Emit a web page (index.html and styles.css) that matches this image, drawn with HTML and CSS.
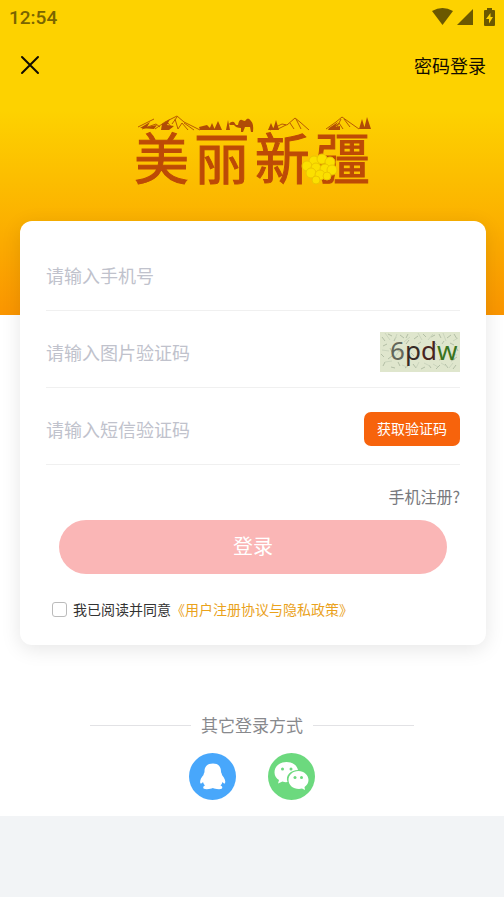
FILE: index.html
```html
<!DOCTYPE html>
<html lang="zh-CN">
<head>
  <meta charset="UTF-8">
  <meta name="viewport" content="width=device-width, initial-scale=1">
  <title>登录</title>
  <link rel="stylesheet" href="styles.css">
</head>
<body>
  <main class="page">
    <header class="hero">
      <div class="status">
        <span class="clock">12:54</span>
        <svg class="status-icons" width="64" height="20" viewBox="0 0 64 20" aria-hidden="true">
          <path d="M0 3Q10.500 -3 21 3L10.500 17Z"/>
          <path d="M25 17H41V1Z"/>
          <path fill-rule="evenodd" d="M55 0H60V2H62Q63 2 63 3V17Q63 18 62 18H53Q52 18 52 17V3Q52 2 53 2H55ZM58.500 5L54 11H57V15.500L61 9H58.500Z"/>
        </svg>
      </div>
      <nav class="nav">
        <button class="close" type="button" aria-label="关闭">
          <svg width="20" height="20" viewBox="0 0 20 20"><path d="M2 2L18 18M18 2L2 18"/></svg>
        </button>
        <a class="switch" href="#">密码登录</a>
      </nav>
      <div class="logo">
        <h1 class="logo-text"><span>美</span><span>丽</span><span>新</span><span>疆</span></h1>
        <svg class="logo-art" width="240" height="72" viewBox="0 0 240 72" aria-hidden="true">
          <!-- mountains -->
          <g class="ridge">
            <path d="M6 12L18 6L22 4M10 14L24 9L28 12M23 14L33 7L45 1L52 7L58 10L68 15M30 13L36 8L40 13M43 4L46 14L50 8L56 15M45 2L40 9M52 8L62 15"/>
            <path d="M138 15L150 9L155 10L163 3L168 7L177 15M146 14L154 10M158 8L162 14M164 4L169 14"/>
            <path d="M194 14L204 7L210 2L217 7L227 14M201 14L207 8L211 14M212 4L218 12M209 4L205 12"/>
          </g>
          <g class="shape">
            <path d="M8 13L18 7L15 12L25 10L22 14Z"/>
            <path d="M30 9L38 4L35 10L42 11L37 15H29Z"/>
            <path d="M67 12L75 10L80 15H68ZM77 15L80 8L83 15ZM82 15L86 6L90 15ZM94 15L96 5L98 15Z"/>
            <path d="M97 9Q99 6 102 7L104 10L106 10Q107 4 110 5Q112 6 113 6Q116 1 119 6Q122 9 121 17H119L118 12L113 12L111 17H109L109 13Q104 13 102 10L98 10Z"/>
            <path d="M136 15L139 8L142 15ZM141 15L144 5L147 15Z"/>
            <path d="M197 13L206 7L203 12L208 11V15H196ZM227 14L230 4L233 14ZM232 14L235 2L239 14Z"/>
          </g>
          <!-- grapes -->
          <g class="grapes">
            <circle cx="182" cy="46" r="5"/><circle cx="190" cy="44" r="5"/><circle cx="198" cy="47" r="5"/>
            <circle cx="175" cy="51" r="5"/><circle cx="184" cy="53" r="5"/><circle cx="193" cy="54" r="5"/><circle cx="200" cy="55" r="5"/>
            <circle cx="179" cy="58" r="5"/><circle cx="188" cy="60" r="5"/><circle cx="195" cy="61" r="4"/><circle cx="184" cy="65" r="4"/>
          </g>
        </svg>
      </div>
    </header>

    <form class="card">
      <div class="field">
        <input type="tel" placeholder="请输入手机号" aria-label="手机号">
      </div>
      <div class="field">
        <input type="text" placeholder="请输入图片验证码" aria-label="图片验证码">
        <button class="captcha" type="button">
          <svg width="80" height="40" viewBox="0 0 80 40">
            <rect width="80" height="40" fill="#dfe6cd"/>
            <g class="noise">
              <path d="M2 5l3 4M8 2l4 2M14 9l2-4M20 3l4 3M28 2l-2 4M34 7l4-3M43 2l3 3M51 5l4-2M59 2l2 4M67 6l4-3M74 2l3 5"/>
              <path d="M3 14l4-2M10 16l2 4M1 22l3 3M8 27l4-3M3 34l2-4M11 35l4 1M18 30l2 4M25 36l4-3M33 32l3 4M41 37l4-2M49 33l2 3M56 37l4-4M65 32l3 4M73 37l3-4"/>
              <path d="M70 11l4 2M76 15l2 4M71 29l4-2M62 12l2-3M54 10l3 3M41 10l-3 2M26 12l3-4M17 18l4 2M23 24l-4 3M31 21l3 3M46 26l4 2M59 28l4-2M77 25l-3 2"/>
            </g>
            <g class="noise light">
              <path d="M5 1l5 7M17 2l-2 5M24 10l6-5M38 1l4 7M48 8l5-6M63 1l3 8M73 9l5-3M2 18l7 1M5 30l7-1M15 25l4-6M22 33l5 2M36 36l3-6M44 31l6 3M53 32l5 3M61 31l7 4M70 22l7 1M69 36l4-5"/>
            </g>
            <text class="captcha-text" x="10" y="28"><tspan fill="#62675a">6</tspan><tspan fill="#352b26">p</tspan><tspan fill="#49251f">d</tspan><tspan fill="#397420">w</tspan></text>
          </svg>
        </button>
      </div>
      <div class="field">
        <input type="text" placeholder="请输入短信验证码" aria-label="短信验证码">
        <button class="get-code" type="button">获取验证码</button>
      </div>
      <a class="register" href="#">手机注册?</a>
      <button class="submit" type="submit">登录</button>
      <div class="agree">
        <input type="checkbox" id="agree">
        <label for="agree">我已阅读并同意</label><a href="#">《用户注册协议与隐私政策》</a>
      </div>
    </form>

    <section class="other">
      <h2 class="other-title">其它登录方式</h2>
      <div class="socials">
        <a href="#" aria-label="QQ">
          <svg width="47" height="47" viewBox="0 0 47 47">
            <circle cx="23.500" cy="23.500" r="23.500" fill="#48a7fb"/>
            <path fill="#fff" d="M24 10.500C18 10.500 15.500 14 15.500 18.500C15.500 20 14.500 20.500 14.500 22C11.500 25 10.500 29 11.500 30.500Q12.500 31 14 29Q14.500 31 16 32.500Q13.500 33.500 14.500 35.500Q17 37 22.500 35.500Q24 34.500 25 35.500Q31 37 33 35.500Q34 33.500 31.500 32.500Q33 31 33.500 29Q35 31 36 30.500C37 28 35.500 25 33 22C33 20.500 32 20 32 18.500C32 14 29.500 10.500 24 10.500Z"/>
          </svg>
        </a>
        <a href="#" aria-label="微信">
          <svg width="47" height="47" viewBox="0 0 47 47">
            <circle cx="23.500" cy="23.500" r="23.500" fill="#6cd97e"/>
            <path fill="#fff" d="M18.500 9C11.500 9 6.500 13.500 6.500 19.500C6.500 23 8.500 25.500 11 27L10 30.500L14.500 28.500Q17 29.500 19.500 29C17 22 23 17 30 17C29 12 24.500 9 18.500 9Z"/>
            <path fill="#fff" d="M30.500 18C24.500 18 20.500 22 20.500 27C20.500 32 25 36 31 36L34 35.500L37 37L36.500 34C39 32 40.500 30 40.500 27C40.500 22 36 18 30.500 18Z"/>
            <g fill="#6cd97e"><circle cx="14.500" cy="16" r="1.500"/><circle cx="23" cy="16" r="1.500"/><circle cx="27" cy="24.500" r="1.500"/><circle cx="33.500" cy="24.500" r="1.500"/></g>
          </svg>
        </a>
      </div>
    </section>
  </main>
</body>
</html>
```

FILE: styles.css
```css
* {
  box-sizing: border-box;
}
body {
  margin: 0;
  background: #f2f4f6;
  font-family: "Noto Sans CJK SC", sans-serif;
}
a {
  text-decoration: none;
}
button {
  border: none;
  padding: 0;
  background: none;
  font-family: inherit;
  cursor: pointer;
}
svg {
  display: block;
}
.page {
  background: #fff;
  padding-bottom: 16px;
}
.hero {
  padding-bottom: 124px;
  background: linear-gradient(#fdd200 35%, #fa9500);
}
.status {
  display: flex;
  justify-content: space-between;
  align-items: center;
  height: 35px;
  padding: 0 8px 0 9px;
}
.clock {
  font: 500 19px Roboto, sans-serif;
  color: #7a6500;
}
.status-icons {
  fill: #6b5800;
}
.nav {
  display: flex;
  justify-content: space-between;
  align-items: center;
  height: 60px;
  padding: 0 18px 0 20px;
}
.close svg {
  fill: none;
  stroke: #120c00;
  stroke-width: 2;
  stroke-linecap: round;
}
.switch {
  font-size: 18px;
  color: #120c00;
}
.logo {
  position: relative;
  width: 240px;
  margin: 20px auto 0;
  padding-top: 4px;
}
.logo-text {
  display: flex;
  justify-content: space-between;
  margin: 0;
  padding: 0 2px;
  font-size: 55px;
  line-height: 72px;
  font-weight: 400;
  color: #bd4a06;
  -webkit-text-stroke: 1px #bd4a06;
}
.logo-art {
  position: absolute;
  left: 0;
  top: 0;
}
.ridge {
  fill: none;
  stroke: #b85a04;
  stroke-width: 1;
}
.shape {
  fill: #b04c06;
}
.grapes {
  fill: #fbe000;
  stroke: #ecc500;
  stroke-width: 1;
}
.card {
  position: relative;
  margin: -94px 18px 0 20px;
  padding: 13px 26px 24px;
  border-radius: 12px;
  background: #fff;
  box-shadow: 0 4px 20px rgba(0, 0, 0, 0.1);
}
.field {
  display: flex;
  align-items: center;
  height: 77px;
  padding-top: 6px;
  border-bottom: 1px solid #f0f0f0;
}
.field input {
  flex: 1;
  min-width: 0;
  padding: 0;
  border: none;
  outline: none;
  background: none;
  font: 18px "Noto Sans CJK SC", sans-serif;
}
.field input::placeholder {
  color: #c0c2cc;
}
.noise {
  fill: none;
  stroke: #b3bfa6;
  stroke-width: 1;
}
.light {
  stroke: #cbd5bd;
}
.captcha-text {
  font: 26px "Noto Sans", sans-serif;
}
.get-code {
  width: 96px;
  height: 34px;
  padding-bottom: 2px;
  border-radius: 7px;
  background: #f7630c;
  color: #fff;
  font-size: 14px;
}
.register {
  display: block;
  width: fit-content;
  margin: 19px 0 12px auto;
  font-size: 16px;
  line-height: 24px;
  color: #77787c;
}
.submit {
  display: block;
  width: calc(100% - 26px);
  height: 54px;
  margin: 0 13px;
  padding-bottom: 4px;
  border-radius: 27px;
  background: #fab6b6;
  color: #fff;
  font-size: 20px;
}
.agree {
  display: flex;
  align-items: center;
  margin-top: 23px;
  padding-left: 6px;
  font-size: 14px;
  line-height: 24px;
  color: #333;
}
.agree input {
  appearance: none;
  width: 15px;
  height: 15px;
  margin: 0 6px 0 0;
  border: 1px solid #bbb;
  border-radius: 3px;
}
.agree input:checked {
  background: #f7630c;
}
.agree a {
  color: #eaa21c;
}
.other {
  padding-top: 67px;
}
.other-title {
  display: flex;
  justify-content: center;
  align-items: center;
  gap: 10px;
  margin: 0;
  font-size: 17px;
  line-height: 26px;
  font-weight: 400;
  color: #88898d;
}
.other-title::before,
.other-title::after {
  content: "";
  width: 20%;
  height: 1px;
  background: #e2e2e5;
}
.socials {
  display: flex;
  justify-content: center;
  gap: 32px;
  margin-top: 15px;
}
```
